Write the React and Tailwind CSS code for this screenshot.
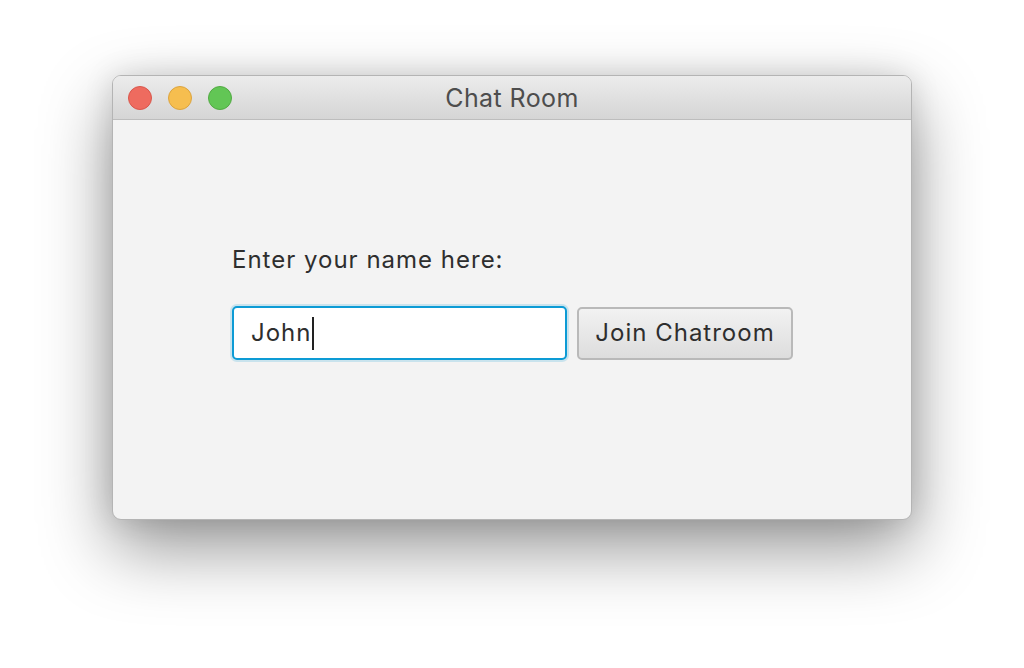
import React from 'react';

const Light = ({ fill, ring }) => (
  <span className={`block w-[24px] h-[24px] rounded-full border ${fill} ${ring}`}></span>
);

export default function App() {
  return (
    <div className="w-[1024px] h-[668px] bg-white pt-[75px] overflow-hidden">
      <div className="mx-auto w-[800px] h-[445px] rounded-[9px] border border-[#b4b4b4] bg-[#f3f3f3] flex flex-col overflow-hidden shadow-[0_28px_70px_rgba(0,0,0,0.42),0_0_30px_rgba(0,0,0,0.12)]">
        {/* title bar */}
        <div className="relative h-[44px] shrink-0 flex items-center px-[15px] gap-[16px] bg-gradient-to-b from-[#ececec] to-[#d5d5d5] border-b border-[#bdbdbd]">
          <Light fill="bg-[#ee6b5f]" ring="border-[#d9574c]" />
          <Light fill="bg-[#f6be4f]" ring="border-[#dca43f]" />
          <Light fill="bg-[#62c655]" ring="border-[#52aa43]" />
          <span className="absolute inset-x-0 top-[1px] h-[44px] flex items-center justify-center text-[25px] tracking-[0.4px] text-[#4d4d4d] font-['Inter',sans-serif] pointer-events-none">
            Chat Room
          </span>
        </div>

        {/* content */}
        <div className="flex-1 pl-[119px] pt-[125px] font-['Inter',sans-serif] text-[#2e2e2e] tracking-[1px]">
          <p className="text-[24px] leading-[30px]">Enter your name here:</p>
          <div className="flex items-center gap-[10px] mt-[31px]">
            <div className="w-[335px] h-[54px] rounded-[5px] border-2 border-[#0d9bd5] bg-white shadow-[0_0_0_2px_rgba(13,155,213,0.18)] flex items-center pl-[17px]">
              <span className="text-[24px] leading-none">John</span>
              <span className="block w-[2px] h-[33px] bg-[#222] ml-[1px]"></span>
            </div>
            <button className="w-[216px] h-[53px] rounded-[5px] border-2 border-[#b9b9b9] bg-gradient-to-b from-[#f2f2f2] to-[#dddddd] text-[24px] text-[#2e2e2e] tracking-[1px]">
              Join Chatroom
            </button>
          </div>
        </div>
      </div>
    </div>
  );
}
